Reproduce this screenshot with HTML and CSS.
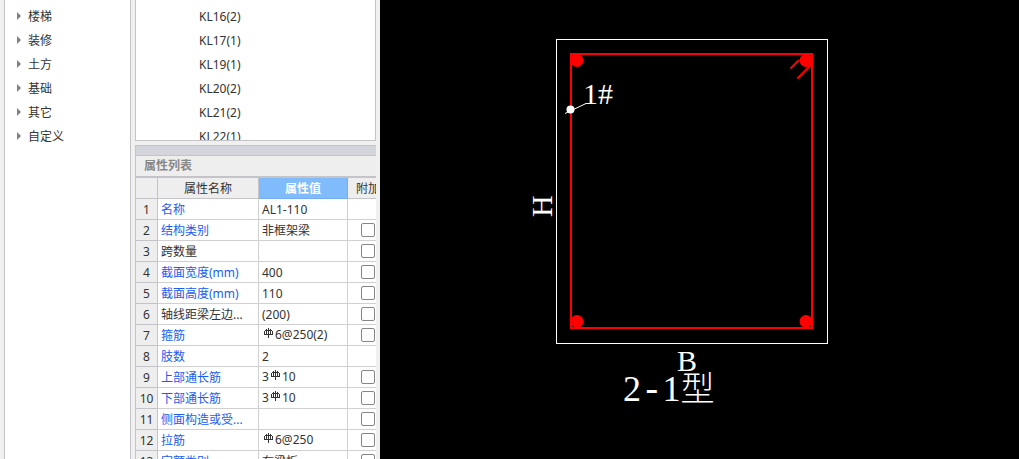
FILE: index.html
```
<!DOCTYPE html>
<html lang="zh-CN">
<head>
<meta charset="utf-8">
<title>属性列表</title>
<link rel="stylesheet" href="styles.css">
</head>
<body>
<svg class="defs" aria-hidden="true">
  <symbol id="rebar" viewBox="0 0 10 11">
    <path d="M4.500 0V10M2.500 1V7M6.500 1V7M0.500 3V6M8.500 3V6M1 2.500H8M0 6.500H9" fill="none" stroke="#333"/>
  </symbol>
</svg>
<main class="app">
  <nav class="modules">
    <ul class="tree">
      <li>楼梯</li>
      <li>装修</li>
      <li>土方</li>
      <li>基础</li>
      <li>其它</li>
      <li>自定义</li>
    </ul>
  </nav>
  <section class="side">
    <ul class="members">
      <li>KL16(2)</li>
      <li>KL17(1)</li>
      <li>KL19(1)</li>
      <li>KL20(2)</li>
      <li>KL21(2)</li>
      <li>KL22(1)</li>
    </ul>
    <div class="panel">
      <div class="grip"></div>
      <h2 class="title">属性列表</h2>
      <table class="props">
        <colgroup><col class="c-num"><col class="c-name"><col class="c-value"><col class="c-extra"></colgroup>
        <thead><tr><th></th><th>属性名称</th><th class="active">属性值</th><th class="extra">附加</th></tr></thead>
        <tbody>
          <tr><th>1</th><td class="key">名称</td><td>AL1-110</td><td></td></tr>
          <tr><th>2</th><td class="key">结构类别</td><td>非框架梁</td><td><input type="checkbox" aria-label="附加 结构类别"></td></tr>
          <tr><th>3</th><td>跨数量</td><td></td><td><input type="checkbox" aria-label="附加 跨数量"></td></tr>
          <tr><th>4</th><td class="key">截面宽度(mm)</td><td>400</td><td><input type="checkbox" aria-label="附加 截面宽度"></td></tr>
          <tr><th>5</th><td class="key">截面高度(mm)</td><td>110</td><td><input type="checkbox" aria-label="附加 截面高度"></td></tr>
          <tr><th>6</th><td>轴线距梁左边...</td><td>(200)</td><td><input type="checkbox" aria-label="附加 轴线距梁左边"></td></tr>
          <tr><th>7</th><td class="key">箍筋</td><td class="bar"><svg class="rebar"><use href="#rebar"/></svg>6@250(2)</td><td><input type="checkbox" aria-label="附加 箍筋"></td></tr>
          <tr><th>8</th><td class="key">肢数</td><td>2</td><td></td></tr>
          <tr><th>9</th><td class="key">上部通长筋</td><td class="bar">3<svg class="rebar"><use href="#rebar"/></svg>10</td><td><input type="checkbox" aria-label="附加 上部通长筋"></td></tr>
          <tr><th>10</th><td class="key">下部通长筋</td><td class="bar">3<svg class="rebar"><use href="#rebar"/></svg>10</td><td><input type="checkbox" aria-label="附加 下部通长筋"></td></tr>
          <tr><th>11</th><td class="key">侧面构造或受...</td><td></td><td><input type="checkbox" aria-label="附加 侧面构造"></td></tr>
          <tr><th>12</th><td class="key">拉筋</td><td class="bar"><svg class="rebar"><use href="#rebar"/></svg>6@250</td><td><input type="checkbox" aria-label="附加 拉筋"></td></tr>
          <tr><th>13</th><td class="key">定额类别</td><td>有梁板</td><td><input type="checkbox" aria-label="附加 定额类别"></td></tr>
        </tbody>
      </table>
    </div>
  </section>
  <section class="canvas">
    <svg class="drawing" viewBox="0 0 639 459" role="img" aria-label="2-1型">
      <rect x="176.500" y="39.500" width="271" height="304" fill="none" stroke="#fff"/>
      <rect x="191" y="54" width="241" height="274" fill="none" stroke="#f00" stroke-width="2"/>
      <g fill="#f00">
        <circle cx="197" cy="60.500" r="6.500"/>
        <circle cx="426" cy="60.500" r="6.500"/>
        <circle cx="197" cy="321.500" r="6.500"/>
        <circle cx="426" cy="321.500" r="6.500"/>
      </g>
      <path d="M410.500 68.500L419 60M417.500 78.500L431 65" stroke="#f00" stroke-width="2"/>
      <path d="M185 113.500L206 103.500H210" fill="none" stroke="#fff"/>
      <circle cx="190.500" cy="109.500" r="4" fill="#fff"/>
      <g class="labels">
        <text x="203" y="104">1#</text>
        <text transform="translate(172 217) rotate(-90)">H</text>
        <text x="297" y="371">B</text>
        <text x="243" y="401" class="type">2<tspan class="dash">-</tspan>1<tspan class="cjk">型</tspan></text>
      </g>
    </svg>
  </section>
</main>
</body>
</html>
```
FILE: styles.css
```
* { box-sizing: border-box; }
body {
  margin: 0;
  font: 12px/20px "Noto Sans", "Noto Sans CJK SC", sans-serif;
  color: #333;
  background: #f0f0f0;
}
ul { list-style: none; margin: 0; padding: 0; }
.defs { display: none; }
.app { display: flex; height: 100vh; overflow: hidden; padding-left: 4px; }
.modules {
  flex: none;
  width: 127px;
  background: #fff;
  border: solid #c4c4c8;
  border-width: 0 1px;
}
.tree { padding: 5px 0 0 12px; }
.tree li { display: flex; align-items: center; gap: 7px; height: 24px; }
.tree li::before {
  content: "";
  border: solid transparent;
  border-width: 4px 0 4px 4px;
  border-left-color: #808080;
  margin-bottom: 2px;
}
.side {
  flex: none;
  width: 249px;
  padding: 0 4px;
  display: flex;
  flex-direction: column;
  gap: 4px;
}
.members {
  flex: none;
  height: 141px;
  overflow: hidden;
  padding: 5px 0 0 63px;
  background: #fff;
  border: solid #c4c4c8;
  border-width: 0 1px 1px;
}
.members li { line-height: 24px; height: 24px; }
.panel {
  flex: 1;
  min-height: 0;
  overflow: hidden;
  border: solid #c4c4c8;
  border-width: 1px 0 0 1px;
  background: #fff;
}
.grip { height: 9px; background: #d4d5da; }
.title {
  margin: 0;
  height: 23px;
  padding-left: 8px;
  font-size: 12px;
  line-height: 20px;
  font-weight: 700;
  color: #888;
  background: #eee;
  border: solid #c4c4c8;
  border-width: 1px 0 2px;
}
.props { width: 245px; table-layout: fixed; border-collapse: separate; border-spacing: 0; }
.c-num { width: 22px; }
.c-name { width: 101px; }
.c-value { width: 89px; }
.c-extra { width: 33px; }
.props th, .props td {
  height: 21px;
  padding: 2px 0 0 3px;
  line-height: 18px;
  font-weight: 400;
  text-align: left;
  white-space: nowrap;
  overflow: hidden;
  border: solid #d0d0d0;
  border-width: 0 1px 1px 0;
}
.props th { padding: 2px 0 0; text-align: center; background: #eee; border-color: #c4c4c8; }
.props .active { background: #80bbfb; color: #fff; font-weight: 700; border-color: #73aef0; }
.props .extra { padding-left: 8px; text-align: left; }
.props .key { color: #1a5cf5; }
.props .bar { padding-top: 0; }
.props td:last-child { padding: 0 0 0 13px; }
.props input {
  appearance: none;
  display: block;
  width: 14px;
  height: 14px;
  margin: 0;
  border: 1px solid #858585;
  border-radius: 2px;
  background: #fff;
}
.rebar { width: 10px; height: 11px; margin: 0 1px 0 2px; vertical-align: 0; }
.canvas { flex: 1; min-width: 0; background: #000; }
.drawing { display: block; width: 100%; height: 100%; }
.labels { fill: #fff; font: 30px "Liberation Serif", "Noto Sans CJK SC", serif; }
.labels .type { font-size: 36px; }
.labels .dash { font-family: "Liberation Mono", monospace; }
.labels .cjk { font-family: "Noto Sans CJK SC", sans-serif; font-size: 34px; font-weight: 300; }
```
